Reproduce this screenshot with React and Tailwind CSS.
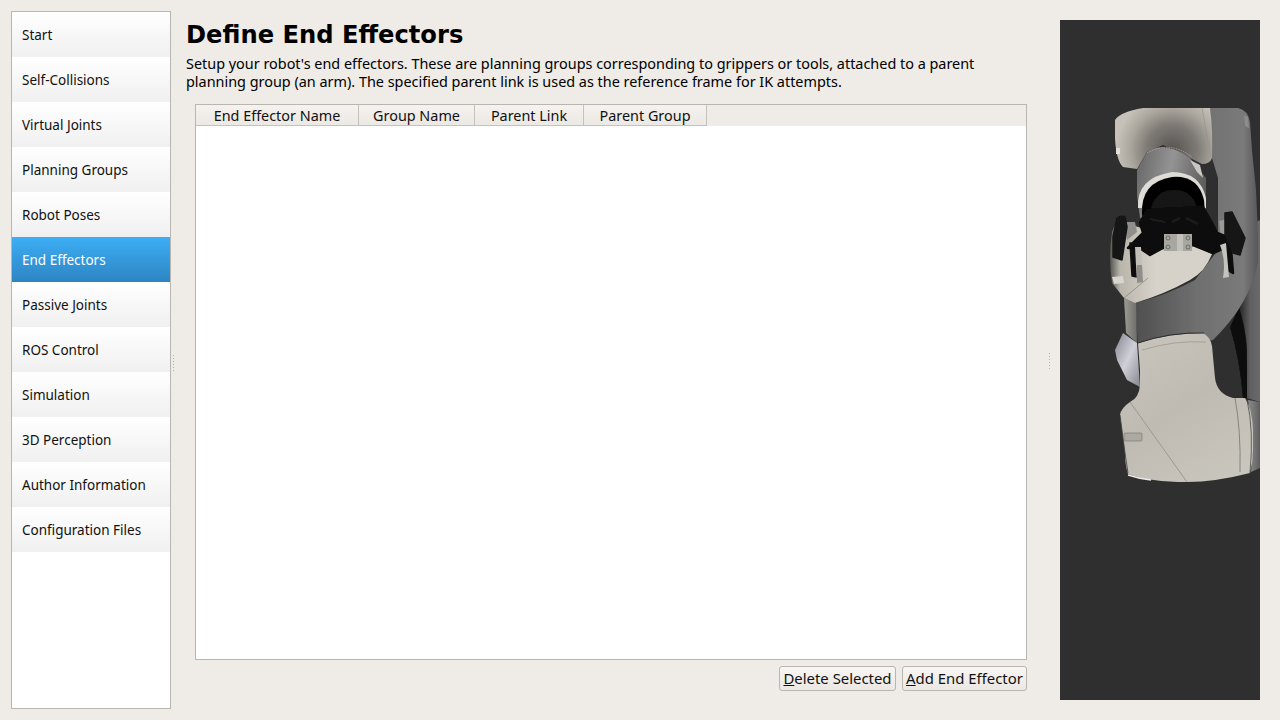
const items = ["Start","Self-Collisions","Virtual Joints","Planning Groups","Robot Poses","End Effectors","Passive Joints","ROS Control","Simulation","3D Perception","Author Information","Configuration Files"];
const cols = [["End Effector Name","w-[163px]"],["Group Name","w-[116px]"],["Parent Link","w-[109px]"],["Parent Group","w-[123px]"]];

function Dots() {
  return (
    <div className="flex flex-col gap-[2px]">
      {[0,1,2,3,4,5].map(i => <div key={i} className="w-[1px] h-[1px] bg-[#b5b1ab]" />)}
    </div>
  );
}

function Robot() {
  return (
    <svg viewBox="1060 20 200 680" className="w-[200px] h-[680px] block">
      <defs>
        <radialGradient id="upper" gradientUnits="userSpaceOnUse" cx="1172" cy="150" r="56">
          <stop offset="0" stopColor="#55534f"/><stop offset="0.45" stopColor="#7d7a75"/><stop offset="0.75" stopColor="#aba79e"/><stop offset="1" stopColor="#c6c2b9"/>
        </radialGradient>
        <linearGradient id="mid" gradientUnits="userSpaceOnUse" x1="1135" y1="0" x2="1258" y2="0">
          <stop offset="0" stopColor="#4f4f4f"/><stop offset="0.5" stopColor="#6f6f6f"/><stop offset="0.88" stopColor="#7a7a7a"/><stop offset="1" stopColor="#585858"/>
        </linearGradient>
        <linearGradient id="rear" gradientUnits="userSpaceOnUse" x1="1240" y1="0" x2="1260" y2="0">
          <stop offset="0" stopColor="#2a2a2a"/><stop offset="0.5" stopColor="#606060"/><stop offset="1" stopColor="#6a6a6a"/>
        </linearGradient>
        <linearGradient id="cyl" gradientUnits="userSpaceOnUse" x1="1137" y1="170" x2="1207" y2="185">
          <stop offset="0" stopColor="#6a6a6a"/><stop offset="0.45" stopColor="#949494"/><stop offset="1" stopColor="#5a5a5a"/>
        </linearGradient>
        <linearGradient id="body" gradientUnits="userSpaceOnUse" x1="1130" y1="340" x2="1220" y2="480">
          <stop offset="0" stopColor="#c8c4bc"/><stop offset="0.5" stopColor="#bfbbb3"/><stop offset="1" stopColor="#c8c5bd"/>
        </linearGradient>
        <linearGradient id="blade" x1="0" y1="0" x2="1" y2="1">
          <stop offset="0" stopColor="#82838c"/><stop offset="0.5" stopColor="#cfd0d8"/><stop offset="1" stopColor="#84858d"/>
        </linearGradient>
        <linearGradient id="cream" gradientUnits="userSpaceOnUse" x1="1110" y1="0" x2="1210" y2="0">
          <stop offset="0" stopColor="#55544f"/><stop offset="0.1" stopColor="#b9b5ab"/><stop offset="0.45" stopColor="#d6d2c9"/><stop offset="1" stopColor="#d6d2c9"/>
        </linearGradient>
        <linearGradient id="strip" gradientUnits="userSpaceOnUse" x1="1124" y1="0" x2="1137" y2="0">
          <stop offset="0" stopColor="#9c9a93"/><stop offset="1" stopColor="#6f6e6a"/>
        </linearGradient>
        <linearGradient id="end" gradientUnits="userSpaceOnUse" x1="1248" y1="0" x2="1260" y2="0">
          <stop offset="0" stopColor="#8c8c8c"/><stop offset="1" stopColor="#5f5f5f"/>
        </linearGradient>
        <filter id="soft"><feGaussianBlur stdDeviation="0.5"/></filter>
      </defs>
      <g filter="url(#soft)">
        <path d="M1256 222 L1260 220 L1260 402 L1247 398 L1247 345 Q1245 325 1238 308 Z" fill="url(#rear)"/>
        <path d="M1230 327 L1239 308 Q1247 330 1247 365 L1247 398 L1243 398 Q1240 360 1230 327 Z" fill="#0a0a0a"/>
        <path d="M1248 400 L1260 402 L1260 468 L1251 472 Q1255 435 1248 400 Z" fill="url(#end)"/>

        <path d="M1210 108 L1238 108 Q1248 110 1250 122 L1252 150 L1256 190 L1258 235 L1258 262 Q1255 280 1248 292 Q1238 315 1213 340 Q1175 348 1138 344 L1135 303 Q1165 296 1195 280 L1218 250 L1218 178 L1212 158 Z" fill="url(#mid)"/>
        <path d="M1244 115 L1248 117 L1249 128 L1245 126 Z" fill="#8c8c8c"/>

        <path d="M1124 298 L1136 303 L1137 343 L1126 333 Z" fill="url(#strip)"/>
        <path d="M1115 350 L1123 333 L1137 343 L1140 387 L1127 380 L1117 360 Z" fill="url(#blade)"/>

        <path d="M1112 232 Q1114 224 1122 222 L1180 240 L1212 254 Q1205 272 1190 280 Q1165 294 1135 303 L1124 298 L1112 283 Q1108 258 1112 232 Z" fill="url(#cream)"/>
        <path d="M1124 298 L1148 278" stroke="#807e78" strokeWidth="0.7" fill="none"/>
        <path d="M1112 277 L1123 276 L1124 283 L1114 284 Z" fill="#d8d5cd"/>

        <path d="M1138 343 Q1170 333 1203 333 Q1211 338 1212 346 L1215 378 Q1217 394 1233 398 L1245 398 Q1252 408 1253 430 L1253 450 Q1253 462 1250 473 Q1215 482 1187 482 Q1150 482 1128 474 Q1125 465 1125 453 L1120 415 Q1121 408 1130 402 Q1139 398 1140 385 L1140 370 Z" fill="url(#body)"/>
        <path d="M1138 343 Q1170 332 1204 333" stroke="#2a2a2a" strokeWidth="1" fill="none"/>
        <path d="M1142 350 Q1175 340 1206 342" stroke="#8f8c85" strokeWidth="0.6" fill="none"/>
        <path d="M1130 402 L1187 482" stroke="#8a8780" strokeWidth="0.7" fill="none"/>
        <path d="M1235 398 Q1241 430 1240 472" stroke="#77746e" strokeWidth="0.8" fill="none"/>
        <path d="M1247 400 Q1254 430 1250 473" stroke="#4a4946" strokeWidth="0.8" fill="none"/>
        <path d="M1120 415 L1125 453 L1128 473" stroke="#3d3c3a" strokeWidth="0.8" fill="none"/>
        <path d="M1128 475 Q1140 479 1151 480" stroke="#ecebe7" strokeWidth="1.4" fill="none"/>
        <rect x="1124" y="433" width="18" height="8" rx="1" fill="#aca9a1" stroke="#77746e" strokeWidth="0.6"/>

        <path d="M1115 120 Q1120 112 1143 108 L1210 108 Q1213 130 1212 158 Q1210 164 1202 164 L1190 158 L1163 145 L1147 152 L1137 169 L1123 167 Q1116 160 1115 138 Z" fill="url(#upper)"/>
        <path d="M1202 108 L1211 158" stroke="#94918a" strokeWidth="0.6" fill="none"/>
        <rect x="1116" y="148" width="4" height="6" fill="#e2e0da"/>

        <path d="M1137 170 L1147 152 Q1165 140 1190 158 L1206 178 L1206 215 L1140 218 L1137 195 Z" fill="url(#cyl)"/>
        <path d="M1147 153 Q1170 140 1192 157" stroke="#c5c2ba" strokeWidth="0.6" strokeDasharray="1.5 1" fill="none"/>
        <path d="M1190 160 L1200 165 L1203 178 L1197 172 Z" fill="#c9c7c1"/>
        <path d="M1138 208 Q1136 178 1172 172 Q1200 172 1206 198 L1206 208 Z" fill="#dedcd6"/>
        <path d="M1142 215 Q1140 182 1172 177 Q1198 175 1204 200 L1206 225 L1150 228 Z" fill="#050505"/>
        <path d="M1150 215 Q1152 192 1172 190 Q1192 189 1197 208 L1197 216 Z" fill="#151515"/>

        <path d="M1125 222 L1135 222 L1137 232 L1127 240 Z" fill="#8f8e8a"/>
        <path d="M1219 221 L1227 219 L1229 236 L1221 238 Z" fill="#9b9a95"/>

        <path d="M1140 223 L1147 210 L1203 207 L1212 223 L1217 233 L1230 238 L1233 273 L1228 270 L1227 247 L1213 253 L1193 245 L1163 248 L1150 255 L1138 247 L1128 248 L1143 233 Z" fill="#090909" stroke="#090909" strokeWidth="2.5" strokeLinejoin="round"/>
        <path d="M1130 243 L1138 244 L1137 277 L1132 276 Z" fill="#111" stroke="#111" strokeWidth="1.5" strokeLinejoin="round"/>
        <path d="M1113 237 L1117 218 Q1122 215 1125 217 L1127 227 L1122 260 L1113 257 Z" fill="#131313" stroke="#131313" strokeWidth="1.5" strokeLinejoin="round"/>
        <path d="M1225 213 L1232 212 L1245 238 L1240 255 L1233 253 L1225 235 Z" fill="#141414" stroke="#141414" strokeWidth="1.5" strokeLinejoin="round"/>
        <path d="M1150 219 L1165 222 M1172 222 L1180 218 M1186 218 L1198 224" stroke="#1f1f1f" strokeWidth="2" fill="none"/>

        <rect x="1164" y="234" width="28" height="17" fill="#a8a6a1"/>
        <rect x="1177" y="234" width="6" height="17" fill="#c2c0ba"/>
        <circle cx="1168" cy="238" r="2" fill="none" stroke="#55534f" strokeWidth="0.7"/>
        <circle cx="1188" cy="238" r="2" fill="none" stroke="#55534f" strokeWidth="0.7"/>
        <circle cx="1168" cy="247" r="2" fill="none" stroke="#55534f" strokeWidth="0.7"/>
        <circle cx="1188" cy="247" r="2" fill="none" stroke="#55534f" strokeWidth="0.7"/>

        <path d="M1135 247 L1141 247 L1143 282 L1137 283 Z" fill="#c0beb8"/>
        <path d="M1137 265 L1142 265 L1143 282 L1137 283 Z" fill="#8f8d88"/>
        <path d="M1220 245 L1226 243 L1229 277 L1223 278 Q1226 260 1220 245 Z" fill="#c5c3bd"/>
      </g>
    </svg>
  );
}

export default function App() {
  return (
    <div className="w-[1280px] h-[720px] flex bg-[#efebe7] overflow-hidden font-['Noto_Sans',sans-serif] text-[#111]">
      <div className="pl-[11px] py-[11px] flex">
        <div className="w-[160px] border border-[#b9b5af] bg-white flex flex-col">
          {items.map((t, i) => (
            <div key={t} className={i === 5
              ? "h-[45px] flex items-center pl-[10px] pt-[2px] text-[13.5px] text-white bg-gradient-to-b from-[#3daef6] to-[#2d85c2]"
              : "h-[45px] flex items-center pl-[10px] pt-[2px] text-[13.5px] bg-gradient-to-b from-white to-[#f0f0f0]"}>
              {t}
            </div>
          ))}
        </div>
      </div>
      <div className="w-[15px] flex items-center justify-start pl-[2px] pt-[6px]"><Dots /></div>
      <div className="w-[856px] flex flex-col pt-[21px]">
        <h1 className="text-[24.2px] leading-[28px] font-bold font-['DejaVu_Sans',sans-serif] text-black">Define End Effectors</h1>
        <p className="mt-[6px] text-[14.42px] leading-[18px] text-black w-[830px]">Setup your robot's end effectors. These are planning groups corresponding to grippers or tools, attached to a parent planning group (an arm). The specified parent link is used as the reference frame for IK attempts.</p>
        <div className="ml-[9px] mt-[13px] w-[832px] h-[556px] border border-[#b9b5af] bg-white flex flex-col">
          <div className="flex h-[21px] bg-[#efebe7] shrink-0">
            {cols.map(([t, w]) => (
              <div key={t} className={`${w} flex items-center justify-center pt-[2px] text-[14.4px] border-r border-b border-[#c5c1bb] bg-gradient-to-b from-[#f5f2ef] to-[#ece8e4]`}>{t}</div>
            ))}
          </div>
        </div>
        <div className="ml-[9px] mt-[6px] w-[832px] flex justify-end gap-[6px]">
          <button className="w-[117px] h-[25px] rounded-[3px] border border-[#b9b5af] bg-gradient-to-b from-[#f8f6f4] to-[#ebe7e3] text-[14.9px] leading-[20px] pb-[2px] flex items-center justify-center"><span><u>D</u>elete Selected</span></button>
          <button className="w-[125px] h-[25px] rounded-[3px] border border-[#b9b5af] bg-gradient-to-b from-[#f8f6f4] to-[#ebe7e3] text-[14.9px] leading-[20px] pb-[2px] flex items-center justify-center"><span><u>A</u>dd End Effector</span></button>
        </div>
      </div>
      <div className="w-[18px] flex items-center pl-[7px] pt-[2px]"><Dots /></div>
      <div className="pt-[20px] pb-[20px] flex">
        <div className="w-[200px] h-[680px] bg-[#2f2f2f]"><Robot /></div>
      </div>
    </div>
  );
}
